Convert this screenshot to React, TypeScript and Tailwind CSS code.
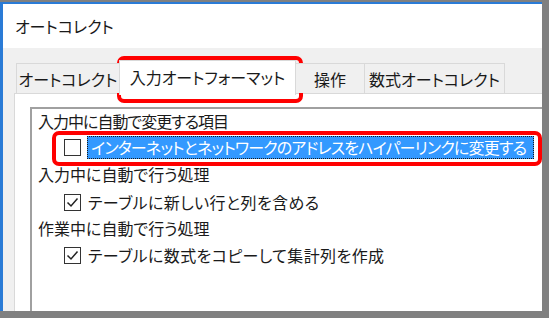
const font = "[font-family:'Noto_Sans_CJK_JP','Noto_Sans',sans-serif] [font-feature-settings:'palt']";

const Check = ({ checked }: { checked: boolean }) => (
  <div className="w-[17px] h-[17px] border border-[#333] bg-white flex items-center justify-center shrink-0">
    {checked && (
      <svg width="13" height="13" viewBox="0 0 13 13">
        <path d="M1.5 6.5 L5 10 L11.5 2.5" fill="none" stroke="#222" strokeWidth="1.5" />
      </svg>
    )}
  </div>
);

const Tab = ({ label, w }: { label: string; w: string }) => (
  <div className={`h-[30px] ${w} border border-[#d9d9d9] border-b-0 -ml-px bg-[#f0f0f0] flex items-center justify-center text-[16px] text-[#1a1a1a]`}>
    {label}
  </div>
);

export default function App() {
  return (
    <div className={`w-[549px] h-[318px] relative overflow-hidden border-t-2 border-r-[7px] border-b-[7px] border-[#808080] bg-white ${font}`}>
      <div className="h-full border-t-2 border-l-[3px] border-[#2a7bd6] flex flex-col">
        <div className="h-[44px] shrink-0 bg-white flex items-center pl-3 text-[16px] text-[#1a1a1a]">
          オートコレクト
        </div>
        <div className="flex-1 bg-[#f0f0f0] pt-[15px] pl-[11px] flex flex-col">
          <div className="flex items-end pl-[3px] h-[30px] relative z-10">
            <Tab label="オートコレクト" w="w-[104px]" />
            <div className="h-[35px] w-[177px] -ml-px bg-white border border-[#d9d9d9] border-b-0 flex items-center justify-center text-[16px] text-[#1a1a1a] mb-[-2px] pb-[3px]">
              入力オートフォーマット
            </div>
            <Tab label="操作" w="w-[70px]" />
            <Tab label="数式オートコレクト" w="w-[141px]" />
          </div>
          <div className="flex-1 bg-white border-l border-t border-[#d9d9d9] pl-[15px] pt-[13px]">
            <div className="h-full border-l-2 border-t-2 border-[#a0a0a0] pl-[6px] text-[16px] text-[#1a1a1a]">
              <div className="h-[24px] flex items-center tracking-[-1px]">入力中に自動で変更する項目</div>
              <div className="h-[28px] flex items-center pl-[26px]">
                <Check checked={false} />
                <div className="ml-[6px] h-[23px] w-[447px] bg-[#3399ff] border border-dotted border-[#1a1a1a] text-white flex items-center pl-[3px] whitespace-nowrap tracking-[-0.8px]">
                  インターネットとネットワークのアドレスをハイパーリンクに変更する
                </div>
              </div>
              <div className="h-[26px] flex items-center">入力中に自動で行う処理</div>
              <div className="h-[30px] flex items-center pl-[26px] gap-[7px]">
                <Check checked />
                <span className="tracking-[0.4px]">テーブルに新しい行と列を含める</span>
              </div>
              <div className="h-[22px] flex items-center">作業中に自動で行う処理</div>
              <div className="h-[32px] flex items-center pl-[26px] gap-[7px]">
                <Check checked />
                <span className="tracking-[0.4px]">テーブルに数式をコピーして集計列を作成</span>
              </div>
            </div>
          </div>
        </div>
      </div>
      <div className="absolute left-[117px] top-[54px] w-[186px] h-[47px] border-[4px] border-[#ff0000] rounded-[7px] pointer-events-none" />
      <div className="absolute left-[52px] top-[129px] w-[490px] h-[35px] border-[4px] border-[#ff0000] rounded-[7px] pointer-events-none" />
    </div>
  );
}
